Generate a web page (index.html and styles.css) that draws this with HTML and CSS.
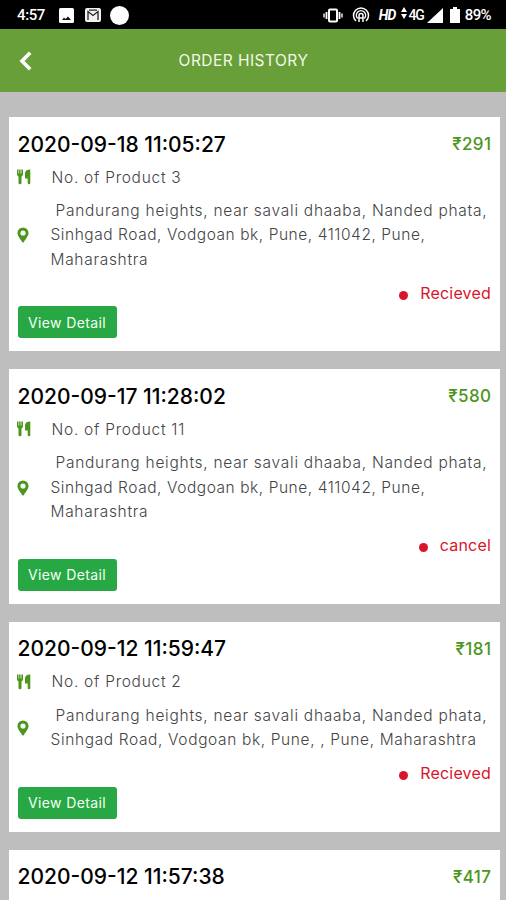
FILE: index.html
```html
<!DOCTYPE html>
<html lang="en">
<head>
<meta charset="utf-8">
<title>Order History</title>
<link rel="stylesheet" href="styles.css">
</head>
<body>
<svg class="defs" width="0" height="0" aria-hidden="true">
  <symbol id="food" viewBox="0 0 14 16">
    <path d="M0 .5h1.200v4h.5v-4h1.200v4h.5v-4h1.200v4h.4v-4h1v4.800q0 1.500-1.500 2.200v6.500q0 1.200-1.500 1.200t-1.500-1.200V7.500Q0 6.800 0 5.300zM13.300.5v13.500q0 1.200-1.300 1.200t-1.300-1.200V9.500H8V4.500Q8 .5 13.300.5z"/>
  </symbol>
  <symbol id="pin" viewBox="0 0 12 16">
    <path fill-rule="evenodd" d="M6 .5a5.500 5.500 0 0 1 5.500 5.500c0 2.500-1.500 4.100-4.700 9.100q-.8 1-1.600 0C2 10.100.5 8.500.5 6A5.500 5.500 0 0 1 6 .5zM6 3.400a2.600 2.600 0 1 0 0 5.200a2.600 2.600 0 0 0 0-5.200z"/>
  </symbol>
</svg>
<header class="statusbar">
  <div class="group">
    <span class="clock">4:57</span>
    <svg width="15" height="15" viewBox="0 0 15 15"><rect width="15" height="15" rx="1.500" fill="#fff"/><path d="M3 12l2-2.500 1.500 1.500L9 8.500l3 3.500z" fill="#111"/></svg>
    <svg class="s-mail" width="16" height="14" viewBox="0 0 16 14"><rect width="16" height="14" rx="2" fill="#f2f2f2"/><path d="M3 12V3.500l5 4 5-4V12M4 2.200h8" fill="none" stroke="#222" stroke-width="1.300"/></svg>
    <span class="s-dot"></span>
  </div>
  <div class="group">
    <svg width="20" height="15" viewBox="0 0 20 15" fill="none" stroke="#fff"><rect x="6" y="1.500" width="8" height="12" rx="1" stroke-width="2"/><path d="M3.500 4v7M16.500 4v7" stroke-width="1.800"/><path d="M1 5.500v4M19 5.500v4" stroke-width="1.400"/></svg>
    <svg class="s-hot" width="18" height="16" viewBox="0 0 18 16" fill="none" stroke="#fff" stroke-width="1.500"><path d="M4 14a7.500 7.500 0 1 1 10 0M5.700 11.500a4.600 4.600 0 1 1 6.600 0"/><path d="M7 15V8.500a2 2 0 0 1 4 0V15M7 11h4"/></svg>
    <span class="hd">HD</span>
    <svg class="s-arr" width="6" height="12" viewBox="0 0 6 12" fill="#fff"><path d="M3 0l3 5H0zM3 12l3-5H0z"/></svg>
    <span class="net">4G</span>
    <svg class="s-sig" width="16" height="15" viewBox="0 0 16 15" fill="#fff"><path d="M16 0v15H0z"/></svg>
    <svg class="s-bat" width="10" height="16" viewBox="0 0 10 16"><path d="M3 0h4v2h3v14H0V2h3z" fill="#fff"/></svg>
    <span class="pct">89%</span>
  </div>
</header>
<nav class="navbar">
  <svg width="13" height="20" viewBox="0 0 13 20" fill="none" stroke="#fff" stroke-width="3.600"><path d="M11.200 1.800L3 10l8.200 8.200"/></svg>
  <h1 class="title">ORDER HISTORY</h1>
</nav>
<main class="orders">
  <article class="card">
    <div class="head"><h2 class="date">2020-09-18 11:05:27</h2><span class="price">₹291</span></div>
    <div class="row"><svg class="food"><use href="#food"/></svg><span class="count">No. of Product 3</span></div>
    <div class="row address"><svg class="pin"><use href="#pin"/></svg><p class="lines"><span class="first">Pandurang heights, near savali dhaaba, Nanded phata,</span><br><span class="second">Sinhgad Road, Vodgoan bk, Pune, 411042, Pune,</span><br>Maharashtra</p></div>
    <div class="state"><i class="dot"></i><span>Recieved</span></div>
    <button class="detail">View Detail</button>
  </article>
  <article class="card">
    <div class="head"><h2 class="date">2020-09-17 11:28:02</h2><span class="price">₹580</span></div>
    <div class="row"><svg class="food"><use href="#food"/></svg><span class="count">No. of Product 11</span></div>
    <div class="row address"><svg class="pin"><use href="#pin"/></svg><p class="lines"><span class="first">Pandurang heights, near savali dhaaba, Nanded phata,</span><br><span class="second">Sinhgad Road, Vodgoan bk, Pune, 411042, Pune,</span><br>Maharashtra</p></div>
    <div class="state"><i class="dot"></i><span>cancel</span></div>
    <button class="detail">View Detail</button>
  </article>
  <article class="card">
    <div class="head"><h2 class="date">2020-09-12 11:59:47</h2><span class="price">₹181</span></div>
    <div class="row"><svg class="food"><use href="#food"/></svg><span class="count">No. of Product 2</span></div>
    <div class="row address"><svg class="pin"><use href="#pin"/></svg><p class="lines"><span class="first">Pandurang heights, near savali dhaaba, Nanded phata,</span><br><span class="third">Sinhgad Road, Vodgoan bk, Pune, , Pune, Maharashtra</span></p></div>
    <div class="state"><i class="dot"></i><span>Recieved</span></div>
    <button class="detail">View Detail</button>
  </article>
  <article class="card">
    <div class="head"><h2 class="date">2020-09-12 11:57:38</h2><span class="price">₹417</span></div>
  </article>
</main>
</body>
</html>
```
FILE: styles.css
```css
* { box-sizing: border-box; }
html, body { margin: 0; height: 900px; overflow: hidden; }
body {
  display: flex;
  flex-direction: column;
  background: #bebebe;
  font-family: Inter, "Noto Sans", sans-serif;
  color: #000;
}
.defs { position: absolute; }
h1, h2, p { margin: 0; }

.statusbar {
  flex: none;
  height: 29px;
  padding: 1px 15px 0 17px;
  display: flex;
  justify-content: space-between;
  align-items: center;
  background: #000;
  color: #fff;
  font: 500 15px/28px Roboto, sans-serif;
}
.group { display: flex; align-items: center; white-space: nowrap; }
.clock { width: 42px; letter-spacing: -.4px; }
.s-mail { margin-left: 11px; }
.s-dot { width: 19px; height: 19px; margin-left: 9px; border-radius: 50%; background: #fff; }
.s-hot { margin-left: 9px; }
.hd { margin-left: 9px; font-size: 14px; font-style: italic; font-weight: 700; letter-spacing: -.8px; }
.s-arr { margin: 0 2px 4px 5px; }
.net { font-size: 14px; letter-spacing: -1.200px; }
.s-sig { margin-left: 3px; }
.s-bat { margin: 0 5px 0 7px; }
.pct { letter-spacing: -.6px; }

.navbar {
  flex: none;
  height: 63px;
  padding-left: 19px;
  display: grid;
  grid-template-columns: 13px 1fr 51px;
  align-items: center;
  background: #689f38;
}
.title { color: #f2f9ea; font-size: 15.500px; font-weight: 400; text-align: center; letter-spacing: .46px; }

.orders {
  padding: 25px 6.500px 0 9px;
  display: flex;
  flex-direction: column;
  gap: 18px;
}
.card { flex: none; padding: 12px 8.500px 12.800px; background: #fff; }
.card:last-child { height: 210px; }
.head { height: 30px; display: flex; justify-content: space-between; align-items: center; }
.date { font-size: 21px; font-weight: 500; white-space: nowrap; }
.price { color: #4b961b; font-size: 17px; font-weight: 500; letter-spacing: .4px; margin-right: -.4px; }
.row { height: 24px; margin-top: 6px; display: flex; align-items: center; color: #444; font-size: 15.500px; font-weight: 300; }
.row svg { flex: none; fill: #4b961b; }
.food { width: 14px; height: 16px; margin-left: -.5px; }
.count { margin-left: 20.500px; letter-spacing: .73px; }
.address { height: auto; margin-top: 10px; }
.pin { width: 12px; height: 16px; margin-left: -1px; }
.lines { margin-left: 22px; line-height: 24.300px; white-space: nowrap; letter-spacing: .7px; }
.first { margin-left: 5px; letter-spacing: .73px; }
.second { letter-spacing: .55px; }
.third { letter-spacing: .63px; }
.state { height: 24px; margin: 9px 0 1.300px; display: flex; justify-content: flex-end; align-items: center; color: #d9142b; font-size: 16px; letter-spacing: .2px; }
.dot { width: 9px; height: 9px; margin: 5px 12px 0 0; border-radius: 50%; background: #d9142b; }
.detail {
  display: block;
  width: 99px;
  height: 32px;
  margin-bottom: .4px;
  padding: 0;
  border: 0;
  border-radius: 3px;
  background: #28a745;
  color: #f4fff4;
  font: 400 14px/31px Inter, sans-serif;
  letter-spacing: .38px;
}
```
